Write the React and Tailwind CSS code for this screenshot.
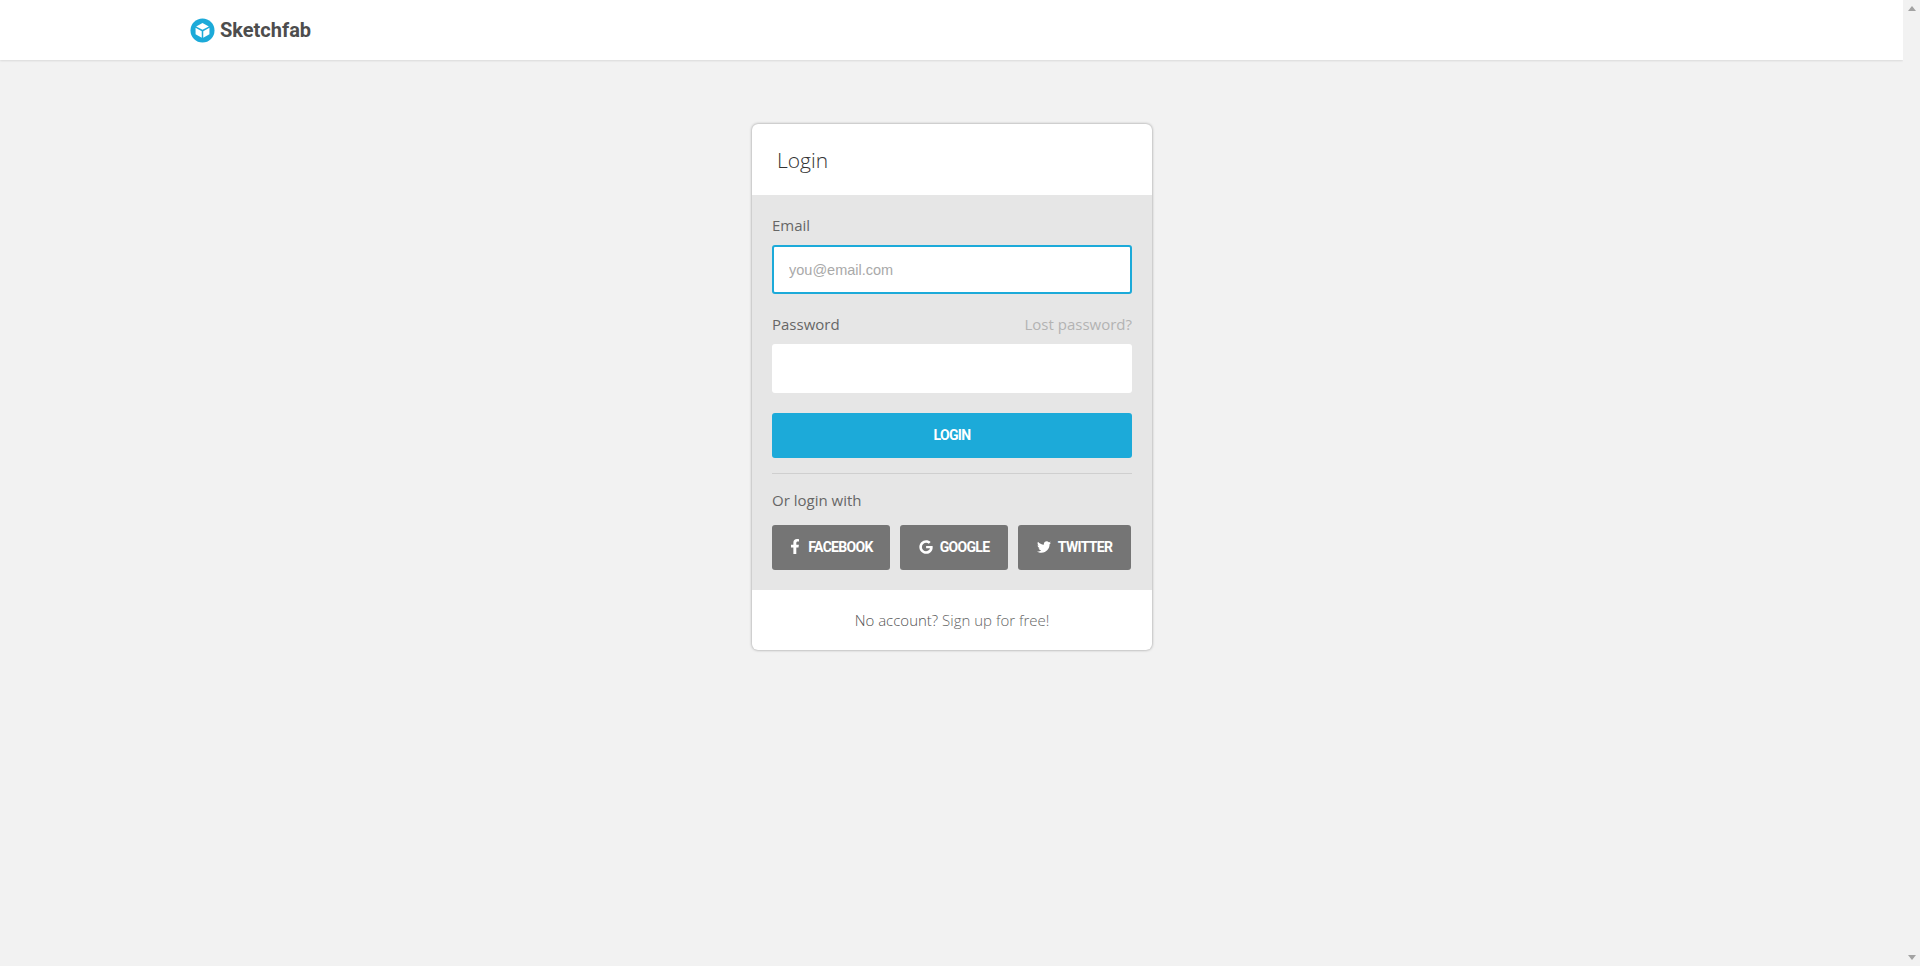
import { FaFacebookF, FaGoogle, FaTwitter } from "react-icons/fa";

const body = "font-['Open_Sans',sans-serif]";
const cond = "font-['Roboto',sans-serif] font-bold tracking-[-0.05em]";

function Logo() {
  return (
    <svg viewBox="0 0 26 26" className="w-[25px] h-[25px]">
      <circle cx="13" cy="13" r="12.5" fill="#1caad9" />
      <path d="M13 5.2 L19.6 8.8 L13 12.3 L6.4 8.8 Z" fill="#fff" />
      <path d="M5.8 10.2 L12.2 13.7 L12.2 20.6 L5.8 17 Z" fill="#fff" />
      <path d="M20.2 10.2 L13.8 13.7 L13.8 20.6 L20.2 17 Z" fill="#fff" />
    </svg>
  );
}

function SocialButton({ icon, label, width }) {
  return (
    <button className={`${width} h-[45px] flex items-center justify-center gap-[7px] rounded-[3px] bg-[#757575] text-white text-[14px] ${cond}`}>
      {icon}
      {label}
    </button>
  );
}

export default function App() {
  return (
    <div className={`flex h-screen overflow-hidden bg-[#f2f2f2] ${body}`}>
      <div className="flex-1 min-w-0">
        {/* Top bar */}
        <header className="h-[60px] bg-white shadow-[0_1px_2px_rgba(0,0,0,0.1)] flex items-center pl-[190px]">
          <Logo />
          <span className="ml-[5px] text-[20px] font-bold text-[#4d4d4d] font-['Roboto',sans-serif]">Sketchfab</span>
        </header>

        {/* Login card */}
        <div className="pt-[64px] pl-[752px]">
          <div className="w-[400px] h-[526px] flex flex-col rounded-[6px] bg-white overflow-hidden shadow-[0_0_3px_rgba(0,0,0,0.4)]">
            <div className="h-[71px] shrink-0 flex items-center px-[25px] pt-[2px] text-[21px] font-light text-[#333]">
              Login
            </div>

            <div className="h-[395px] shrink-0 bg-[#e6e6e6] px-[20px] pt-[20px] text-[15px] text-[#666]">
              <label className="block h-[30px] leading-[20px]">Email</label>
              <input
                type="text"
                placeholder="you@email.com"
                className="block w-[360px] h-[49px] px-[15px] rounded-[3px] border-2 border-[#1caad9] bg-white outline-none text-[14.5px] font-['Liberation_Sans',sans-serif] placeholder:text-[#a9a9a9]"
              />

              <div className="mt-[20px] h-[30px] flex justify-between leading-[20px]">
                <label>Password</label>
                <a className="text-[#b3b3b3]">Lost password?</a>
              </div>
              <input
                type="password"
                className="block w-[360px] h-[49px] rounded-[3px] bg-white outline-none"
              />

              <button className={`block mt-[20px] w-[360px] h-[45px] rounded-[3px] bg-[#1caad9] text-white text-[14px] ${cond}`}>
                LOGIN
              </button>

              <div className="mt-[15px] border-t border-[#cfcfcf]" />

              <div className="mt-[16px] h-[35px] leading-[20px]">Or login with</div>

              <div className="flex gap-[10px]">
                <SocialButton width="w-[118px]" label="FACEBOOK" icon={<FaFacebookF className="w-[12px] h-[15px] -translate-y-px" />} />
                <SocialButton width="w-[108px]" label="GOOGLE" icon={<FaGoogle className="w-[14px] h-[14px] -translate-y-px" />} />
                <SocialButton width="w-[113px]" label="TWITTER" icon={<FaTwitter className="w-[14px] h-[14px] -translate-y-px" />} />
              </div>
            </div>

            <div className="flex-1 flex items-center justify-center text-[15px] font-light text-[#555]">
              <span>No account? <a className="text-[#666]">Sign up for free!</a></span>
            </div>
          </div>
        </div>
      </div>

      {/* Scrollbar */}
      <div className="w-[17px] shrink-0 flex flex-col justify-between items-center py-[6px] bg-[#f2f2f2]">
        <svg viewBox="0 0 8 5" className="w-[8px] h-[5px]"><path d="M4 0 L8 5 L0 5 Z" fill="#a3a3a3" /></svg>
        <svg viewBox="0 0 8 5" className="w-[8px] h-[5px]"><path d="M0 0 L8 0 L4 5 Z" fill="#a3a3a3" /></svg>
      </div>
    </div>
  );
}
